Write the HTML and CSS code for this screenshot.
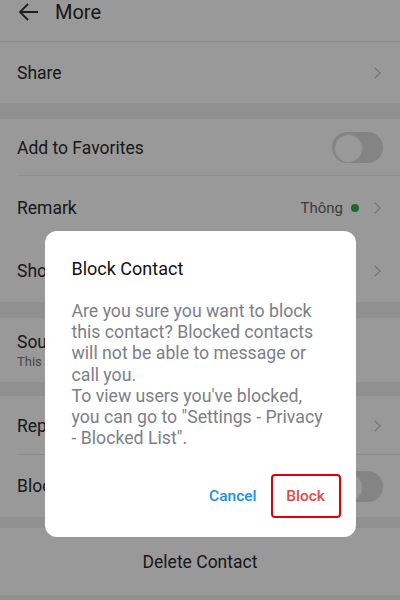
FILE: index.html
```html
<!DOCTYPE html>
<html lang="en">
<head>
<meta charset="UTF-8">
<meta name="viewport" content="width=device-width, initial-scale=1.0">
<title>More</title>
<link rel="stylesheet" href="styles.css">
</head>
<body>
<div class="page">
    <div class="topbar">
        <svg class="back" width="24" height="24" viewBox="0 0 24 24"><path d="M21 12H3M11 4l-8 8 8 8" fill="none" stroke="#333" stroke-width="1.8"/></svg>
        <span class="title">More</span>
    </div>

    <div class="row">
        <span class="label">Share</span>
        <span class="chev"></span>
    </div>
    <div class="gap"></div>

    <div class="row line fav">
        <span class="label">Add to Favorites</span>
        <span class="switch"></span>
    </div>
    <div class="row mid">
        <span class="label">Remark</span>
        <span class="value">Thông <i class="dot"></i></span>
        <span class="chev"></span>
    </div>
    <div class="row mid">
        <span class="label">Show Profile</span>
        <span class="chev"></span>
    </div>
    <div class="gap"></div>

    <div class="row tall">
        <div>
            <div class="label">Sound</div>
            <div class="sub">This contact's notification sound</div>
        </div>
    </div>
    <div class="gap mid"></div>

    <div class="row line rep">
        <span class="label">Report</span>
        <span class="chev"></span>
    </div>
    <div class="row blk">
        <span class="label">Block Contact</span>
        <span class="switch"></span>
    </div>
    <div class="gap small"></div>

    <div class="row center">
        <span class="label">Delete Contact</span>
    </div>
    <div class="gap small"></div>
</div>

<div class="mask">
    <div class="dialog">
        <h3>Block Contact</h3>
        <p>Are you sure you want to block this contact? Blocked contacts will not be able to message or call you.<br>To view users you've blocked, you can go to "Settings - Privacy - Blocked List".</p>
        <div class="actions">
            <button class="cancel">Cancel</button>
            <button class="block">Block</button>
        </div>
    </div>
</div>
</body>
</html>
```

FILE: styles.css
```css
*{
    box-sizing: border-box;
}
body{
    margin: 0;
    font-family: Roboto, "Noto Sans", sans-serif;
    color: #2a2a2a;
    background: #f0f0f0;
}
.page{
    width: 400px;
    height: 600px;
    overflow: hidden;
}
.topbar{
    height: 42px;
    display: flex;
    align-items: center;
    padding: 0 0 18px 17px;
    background: #fff;
    border-bottom: 1px solid #ebebeb;
}
.back{
    margin-right: 14px;
}
.title{
    font-size: 20px;
}
.row{
    height: 61px;
    display: flex;
    align-items: center;
    padding: 0 17px;
    background: #fff;
    font-size: 17.5px;
    position: relative;
}
.row .label{
    flex: 1;
}
.row.fav{
    height: 57px;
}
.row.mid{
    height: 63px;
}
.row.rep{
    height: 59px;
}
.row.blk{
    height: 62px;
}
.line::after{
    content: "";
    position: absolute;
    left: 17px;
    right: 0;
    bottom: 0;
    border-bottom: 1px solid #ececec;
}
.tall{
    height: 64px;
}
.sub{
    font-size: 13px;
    color: #777;
    margin-top: 2px;
}
.center{
    height: 67px;
    text-align: center;
}
.gap{
    height: 16px;
}
.gap.mid{
    height: 14px;
}
.gap.small{
    height: 11px;
}
.chev{
    width: 8px;
    height: 8px;
    border-top: 1.5px solid #bbb;
    border-right: 1.5px solid #bbb;
    transform: rotate(45deg);
    margin-right: 4px;
}
.value{
    font-size: 15px;
    color: #666;
    display: flex;
    align-items: center;
    margin-right: 12px;
}
.dot{
    width: 8px;
    height: 8px;
    border-radius: 50%;
    background: #2fb24a;
    margin-left: 8px;
}
.switch{
    width: 51px;
    height: 31px;
    border-radius: 16px;
    background: #dcdcdc;
    position: relative;
}
.switch::before{
    content: "";
    position: absolute;
    left: 2px;
    top: 2px;
    width: 27px;
    height: 27px;
    border-radius: 50%;
    background: #fff;
    border: 1px solid #e2e2e2;
}
.mask{
    position: fixed;
    inset: 0;
    background: rgba(0,0,0,0.4);
    display: flex;
    justify-content: center;
    padding-top: 231px;
}
.dialog{
    width: 311px;
    height: 306px;
    background: #fff;
    border-radius: 12px;
    padding: 27px 15px 0 27px;
}
.dialog h3{
    margin: 0;
    font-size: 18px;
    font-weight: 400;
    color: #111;
}
.dialog p{
    width: 255px;
    margin: 22px 0 0;
    font-size: 17.7px;
    line-height: 21.2px;
    color: #7b8087;
}
.actions{
    display: flex;
    justify-content: flex-end;
    align-items: center;
    margin-top: 25px;
}
.actions button{
    font-family: Roboto, sans-serif;
    font-size: 15.5px;
    font-weight: 500;
    background: none;
    border: none;
    padding: 0;
}
.cancel{
    color: #1c8fe0;
    margin-right: 14px;
}
.block{
    color: #e04a47;
    width: 70px;
    height: 44px;
    border: 2px solid #e0000a !important;
    border-radius: 4px;
}
```
